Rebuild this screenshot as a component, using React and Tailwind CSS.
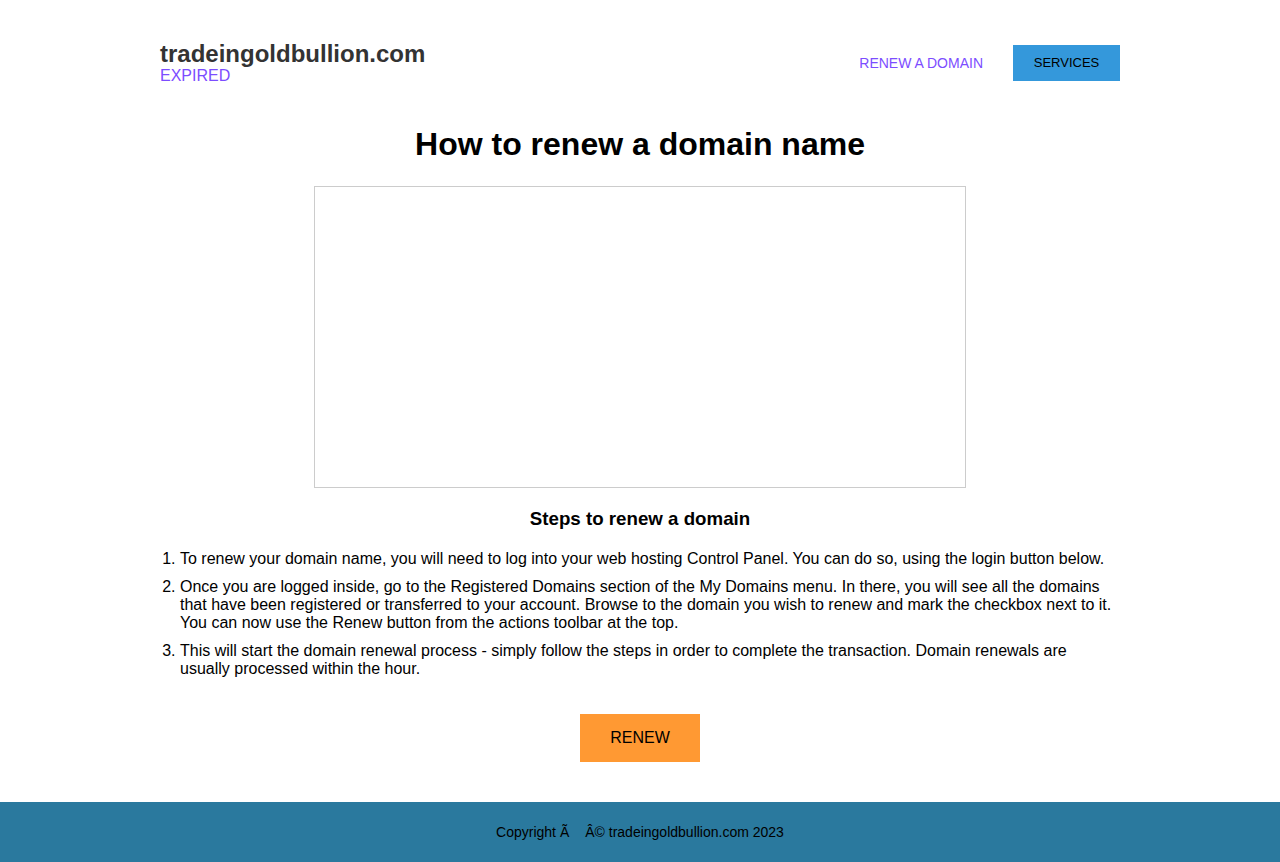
export default function App() {
  return (
    <div className="min-h-[862px] flex flex-col bg-white text-black" style={{ fontFamily: '"Liberation Sans", Arial, sans-serif' }}>
      <div className="w-[960px] mx-auto flex-1">
        <header className="flex items-center justify-between pt-[40px]">
          <div className="flex flex-col">
            <div className="text-[24px] font-bold leading-[27px] text-[#333333]">tradeingoldbullion.com</div>
            <div className="text-[16px] leading-[18px] text-[#7c4dff]">EXPIRED</div>
          </div>
          <nav className="flex items-center gap-[30px]">
            <a className="text-[14px] text-[#7c4dff] uppercase pt-[2px]">RENEW A DOMAIN</a>
            <a className="bg-[#3498db] text-[13px] text-black h-[36px] w-[107px] flex items-center justify-center">SERVICES</a>
          </nav>
        </header>
        <main className="flex flex-col items-center">
          <h1 className="mt-[41px] text-[32px] font-bold leading-[37px]">How to renew a domain name</h1>
          <div className="mt-[23px] w-[652px] h-[302px] border border-[#cccccc]"></div>
          <h3 className="mt-[20px] text-[18.72px] font-bold leading-[22px]">Steps to renew a domain</h3>
          <ol className="mt-[20px] w-full list-decimal pl-[20px] text-[16px] leading-[18px]">
            <li className="mb-[10px]">To renew your domain name, you will need to log into your web hosting Control Panel. You can do so, using the login button below.</li>
            <li className="mb-[10px]">Once you are logged inside, go to the Registered Domains section of the My Domains menu. In there, you will see all the domains that have been registered or transferred to your account. Browse to the domain you wish to renew and mark the checkbox next to it. You can now use the Renew button from the actions toolbar at the top.</li>
            <li>This will start the domain renewal process - simply follow the steps in order to complete the transaction. Domain renewals are usually processed within the hour.</li>
          </ol>
          <a className="mt-[36px] w-[120px] h-[48px] bg-[#ff9933] flex items-center justify-center text-[16px] text-black">RENEW</a>
        </main>
      </div>
      <footer className="mt-[40px] h-[60px] bg-[#2a799e] flex items-center justify-center text-[14px] text-black">
        <span>Copyright Ã<span className="inline-block w-[16px]"></span>Â© tradeingoldbullion.com 2023</span>
      </footer>
    </div>
  );
}
